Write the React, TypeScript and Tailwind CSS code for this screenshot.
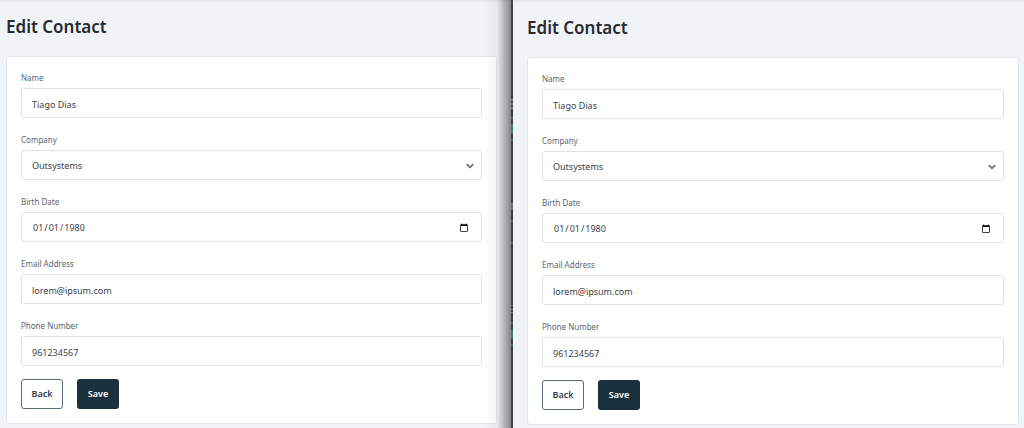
import type { ReactNode } from "react";
import { clsx } from "clsx";

interface FieldProps {
  id: string;
  label: string;
  children: ReactNode;
}

interface ContactFormProps {
  prefix: string;
  className?: string;
}

const control =
  "block h-[30px] w-full rounded-[3px] border border-[#dfe2e6] bg-white px-[10px] pt-[2px] text-[9px] text-[#3c4248] outline-none focus:border-[#1b313e]";

const codeMarks = [
  { top: 99, className: "h-[2px] bg-[#6b6f73]" },
  { top: 103, className: "h-[2px] bg-[#6b6f73]" },
  { top: 107, className: "h-[2px] bg-[#6b6f73]" },
  { top: 117, className: "h-[2px] bg-[#3c6a5c]" },
  { top: 124, className: "h-[10px] bg-[#3c7a66]" },
  { top: 139, className: "h-[2px] bg-[#3c6a5c]" },
  { top: 203, className: "h-[7px] bg-[#6b6f73]" },
  { top: 220, className: "h-[2px] bg-[#735d46]" },
  { top: 242, className: "h-[2px] bg-[#735d46]" },
  { top: 305, className: "h-px bg-[#6b6f73]" },
  { top: 309, className: "h-px bg-[#6b6f73]" },
  { top: 312, className: "h-px bg-[#6b6f73]" },
  { top: 322, className: "h-[2px] bg-[#3c6a5c]" },
  { top: 329, className: "h-[10px] bg-[#3c7a66]" },
  { top: 344, className: "h-[2px] bg-[#3c6a5c]" },
];

function Field({ id, label, children }: FieldProps) {
  return (
    <div className="flex flex-col gap-[3px]">
      <label htmlFor={id} className="text-[8px] leading-[14px] text-[#5c6670]">
        {label}
      </label>
      {children}
    </div>
  );
}

function ContactForm({ prefix, className }: ContactFormProps) {
  return (
    <section
      className={clsx(
        "min-w-0 border-t-2 border-[#e4e8ec] bg-[#f0f4f7]",
        className,
      )}
    >
      <h1 className="text-[17px] leading-6 font-semibold text-[#272b30]">
        Edit Contact
      </h1>

      <form
        className="mt-[17px] rounded-[3px] border border-[#e2e7ec] bg-white p-[14px]"
        onSubmit={(e) => e.preventDefault()}
      >
        <div className="flex flex-col gap-[15px]">
          <Field id={`${prefix}-name`} label="Name">
            <input
              id={`${prefix}-name`}
              type="text"
              defaultValue="Tiago Dias"
              className={control}
            />
          </Field>

          <Field id={`${prefix}-company`} label="Company">
            <div className="relative">
              <select
                id={`${prefix}-company`}
                className={clsx(control, "appearance-none")}
              >
                <option>Outsystems</option>
              </select>
              <svg
                className="pointer-events-none absolute top-3 right-2 h-2 w-2"
                viewBox="0 0 8 8"
                fill="none"
                stroke="#6a7178"
                strokeWidth="1.7"
              >
                <path d="M0.8 2.2 4 5.4 7.2 2.2" />
              </svg>
            </div>
          </Field>

          <Field id={`${prefix}-birth`} label="Birth Date">
            <input
              id={`${prefix}-birth`}
              type="date"
              defaultValue="1980-01-01"
              className={clsx(
                control,
                "[&::-webkit-calendar-picker-indicator]:h-[10px] [&::-webkit-calendar-picker-indicator]:w-[10px]",
              )}
            />
          </Field>

          <Field id={`${prefix}-email`} label="Email Address">
            <input
              id={`${prefix}-email`}
              type="email"
              defaultValue="lorem@ipsum.com"
              className={control}
            />
          </Field>

          <Field id={`${prefix}-phone`} label="Phone Number">
            <input
              id={`${prefix}-phone`}
              type="tel"
              defaultValue="961234567"
              className={control}
            />
          </Field>
        </div>

        {/* Actions */}
        <div className="mt-[13px] flex gap-[14px]">
          <button
            type="button"
            className="h-[30px] w-[42px] rounded-[3px] border border-[#5b6c77] bg-white text-[9px] font-semibold text-[#2f4350]"
          >
            Back
          </button>
          <button
            type="submit"
            className="h-[30px] w-[42px] rounded-[3px] bg-[#1b313e] text-[9px] font-semibold text-white"
          >
            Save
          </button>
        </div>
      </form>
    </section>
  );
}

export default function App() {
  return (
    <main className="grid min-h-screen grid-cols-[1fr_2px_1fr] bg-[#f0f4f7] font-['Noto_Sans','Open_Sans',sans-serif]">
      <div className="relative min-w-0">
        <ContactForm prefix="left" className="pt-[13px] pr-[14px] pl-[6px]" />
        {/* Shadow cast by the window on the right */}
        <div className="pointer-events-none absolute inset-y-0 right-0 w-7 bg-linear-to-r from-black/0 via-black/4 to-black/45" />
      </div>

      {/* Strip of the editor visible between the windows */}
      <div className="relative bg-[#3f4347]">
        {codeMarks.map((mark) => (
          <span
            key={mark.top}
            className={clsx("absolute inset-x-0", mark.className)}
            style={{ top: mark.top }}
          />
        ))}
      </div>

      <ContactForm prefix="right" className="pt-[14px] pr-[5px] pl-[14px]" />
    </main>
  );
}
